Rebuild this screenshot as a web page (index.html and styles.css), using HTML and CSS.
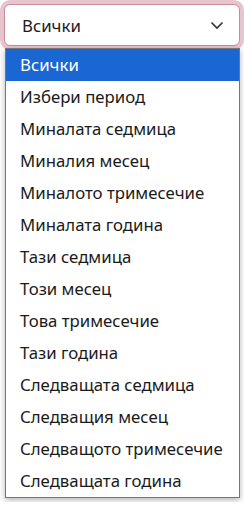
FILE: index.html
```html
<!DOCTYPE html>
<html lang="bg">
<head>
  <meta charset="UTF-8" />
  <meta name="viewport" content="width=device-width, initial-scale=1.0" />
  <title>Период</title>
  <link rel="stylesheet" href="styles.css">
</head>
<body>
  <div class="picker">
    <div class="select">
      <span class="value">Всички</span>
      <svg class="chevron" width="14" height="9" viewBox="0 0 14 9">
        <path d="M1.5 1.5 L7 7 L12.5 1.5" fill="none" stroke="#333" stroke-width="1.6" />
      </svg>
    </div>
    <ul class="options">
      <li class="active">Всички</li>
      <li>Избери период</li>
      <li>Миналата седмица</li>
      <li>Миналия месец</li>
      <li>Миналото тримесечие</li>
      <li>Миналата година</li>
      <li>Тази седмица</li>
      <li>Този месец</li>
      <li>Това тримесечие</li>
      <li>Тази година</li>
      <li>Следващата седмица</li>
      <li>Следващия месец</li>
      <li>Следващото тримесечие</li>
      <li>Следващата година</li>
    </ul>
  </div>
</body>
</html>
```

FILE: styles.css
```css
body {
  margin: 0;
  font-family: "Noto Sans", "Open Sans", sans-serif;
  font-size: 16.8px;
  color: #1b1b1b;
  background: #fff;
}
.picker {
  padding: 4px;
}
.select {
  display: flex;
  align-items: center;
  justify-content: space-between;
  height: 40px;
  padding: 0 15px 0 17px;
  border: 1px solid #c98a9c;
  border-radius: 6px;
  box-shadow: 0 0 0 4px #e8c5ce;
  background: #fff;
}
.chevron {
  display: block;
}
.options {
  list-style: none;
  margin: 2px 0 0 1px;
  padding: 0;
  border: 1px solid #767676;
  box-shadow: 0 2px 6px rgba(0, 0, 0, 0.3);
  background: #fff;
}
.options li {
  height: 32px;
  line-height: 32px;
  padding-left: 14px;
  white-space: nowrap;
}
.options li.active {
  background: #1a66d2;
  color: #fff;
}
```
